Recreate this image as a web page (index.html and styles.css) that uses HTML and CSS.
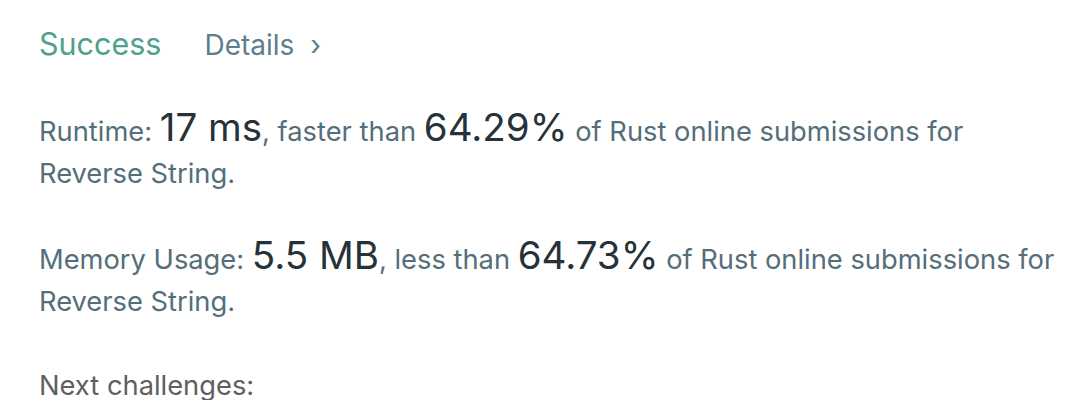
FILE: index.html
```html
<!DOCTYPE html>
<html>
<head>
<meta charset="utf-8">
<link rel="stylesheet" href="styles.css">
</head>
<body>
<div class="panel">
  <div class="header">
    <span class="status">Success</span>
    <a class="details">Details <span class="chev">›</span></a>
  </div>
  <p class="stat">Runtime: <span class="big">17 ms</span>, faster than <span class="big">64.29%</span> of Rust online submissions for Reverse String.</p>
  <p class="stat">Memory Usage: <span class="big">5.5 MB</span>, less than <span class="big">64.73%</span> of Rust online submissions for Reverse String.</p>
  <p class="next">Next challenges:</p>
</div>
</body>
</html>
```

FILE: styles.css
```css
html, body {
  margin: 0;
  padding: 0;
  background: #ffffff;
}
body {
  font-family: Inter, "Noto Sans", sans-serif;
}
.panel {
  padding: 22px 24px 0 39px;
}
.header {
  display: flex;
  align-items: baseline;
  gap: 43px;
  line-height: 44px;
}
.status {
  font-size: 30.5px;
  color: #4fa08e;
}
.details {
  font-size: 28px;
  color: #607d8b;
}
.chev {
  margin-left: 8px;
}
.stat {
  margin: 44px 0 0 0;
  font-size: 27.3px;
  line-height: 42px;
  color: #546e7a;
}
.big {
  font-size: 38.5px;
  line-height: 28px;
  color: #263238;
}
.next {
  margin: 42px 0 0 0;
  font-size: 27.3px;
  line-height: 42px;
  color: #5f5f5f;
}
```
